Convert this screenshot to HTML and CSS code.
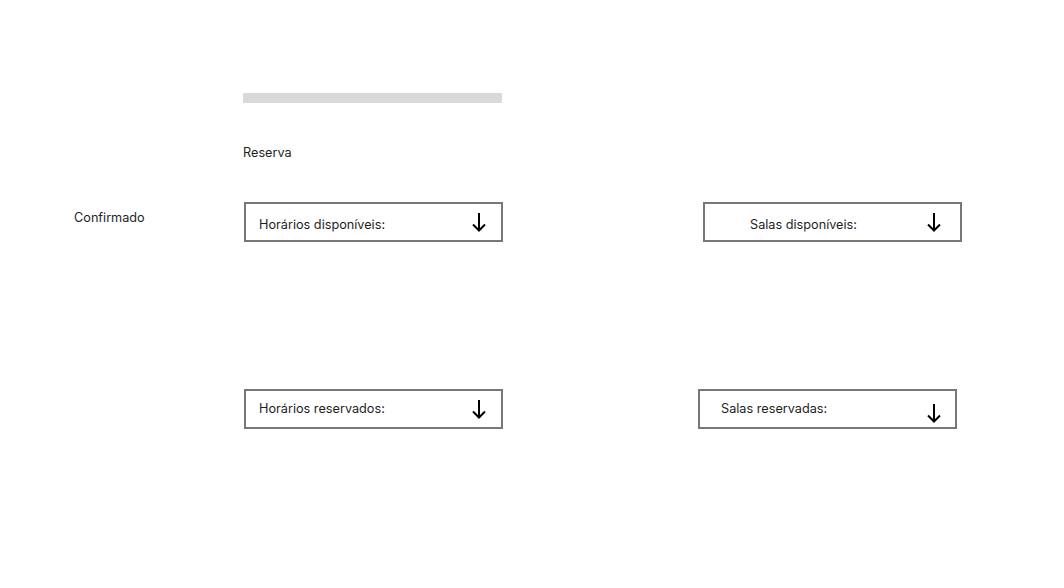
FILE: index.html
```html
<!DOCTYPE html>
<html lang="pt">
<head>
<meta charset="utf-8">
<title>Reserva</title>
<link rel="stylesheet" href="styles.css">
</head>
<body>
<main class="page">
  <div class="top-bar"></div>
  <div class="title">Reserva</div>

  <section class="row row-available">
    <div class="status">Confirmado</div>
    <div class="select select-hours-av">
      <span class="label">Horários disponíveis:</span>
      <svg class="arrow" width="16" height="20" viewBox="0 0 16 20"><path d="M8 1V18.5M2 12.5L8 18.5L14 12.5" fill="none" stroke="#000" stroke-width="2"/></svg>
    </div>
    <div class="select select-rooms-av">
      <span class="label">Salas disponíveis:</span>
      <svg class="arrow" width="16" height="20" viewBox="0 0 16 20"><path d="M8 1V18.5M2 12.5L8 18.5L14 12.5" fill="none" stroke="#000" stroke-width="2"/></svg>
    </div>
  </section>

  <section class="row row-reserved">
    <div class="select select-hours-res">
      <span class="label">Horários reservados:</span>
      <svg class="arrow" width="16" height="20" viewBox="0 0 16 20"><path d="M8 1V18.5M2 12.5L8 18.5L14 12.5" fill="none" stroke="#000" stroke-width="2"/></svg>
    </div>
    <div class="select select-rooms-res">
      <span class="label">Salas reservadas:</span>
      <svg class="arrow" width="16" height="20" viewBox="0 0 16 20"><path d="M8 1V18.5M2 12.5L8 18.5L14 12.5" fill="none" stroke="#000" stroke-width="2"/></svg>
    </div>
  </section>
</main>
</body>
</html>
```
FILE: styles.css
```css
* { box-sizing: border-box; }
html, body {
  margin: 0;
  background: #ffffff;
}
body {
  font-family: Inter, "Noto Sans", "Liberation Sans", sans-serif;
  font-size: 12.7px;
  line-height: 16px;
  color: #1e1e1e;
}
.page {
  width: 1064px;
  height: 588px;
  padding-top: 93px;
}
.top-bar {
  margin-left: 243px;
  width: 259px;
  height: 10px;
  background: #d9d9d9;
}
.title {
  margin-left: 243px;
  margin-top: 42px;
}
.row {
  display: flex;
  align-items: flex-start;
}
.row-available {
  margin-top: 41px;
  padding-left: 74px;
}
.status {
  width: 170px;
  margin-top: 8px;
}
.select {
  width: 259px;
  height: 40px;
  border: 2px solid #777777;
  display: flex;
  align-items: center;
  justify-content: space-between;
  padding-right: 14px;
}
.select-hours-av {
  padding-left: 13px;
  padding-top: 6px;
}
.select-hours-av .arrow { margin-top: -6px; }
.select-rooms-av {
  margin-left: 200px;
  padding-left: 45px;
  padding-right: 18px;
  padding-top: 6px;
}
.select-rooms-av .arrow { margin-top: -6px; }
.row-reserved {
  margin-top: 147px;
  padding-left: 244px;
}
.select-hours-res {
  padding-left: 13px;
}
.select-rooms-res {
  margin-left: 195px;
  padding-left: 21px;
  padding-right: 13px;
}
.select-rooms-res .label { margin-top: 0; }
.select-rooms-res .arrow { margin-top: 8px; }
.arrow { display: block; flex: none; }
```
